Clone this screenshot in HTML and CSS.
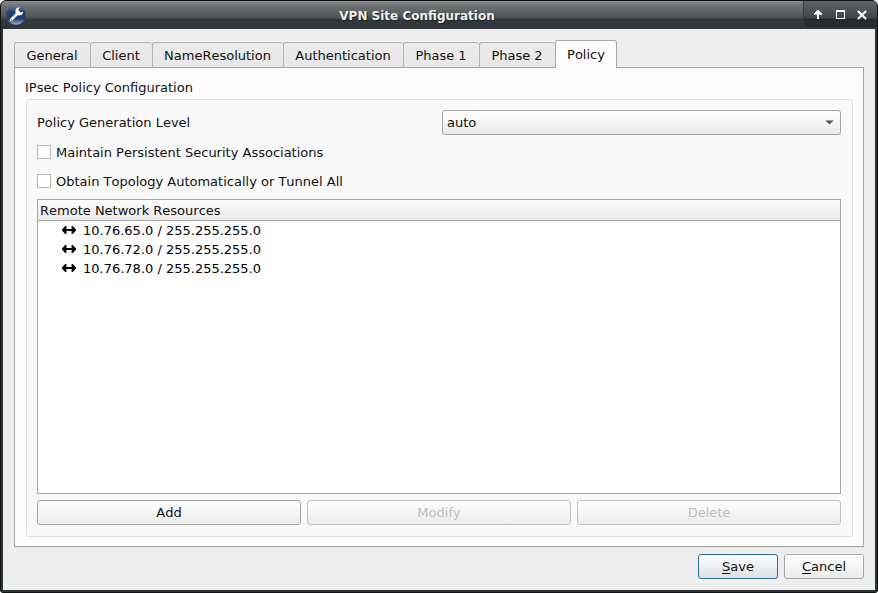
FILE: index.html
```html
<!DOCTYPE html>
<html lang="en">
<head>
<meta charset="utf-8">
<title>VPN Site Configuration</title>
<link rel="stylesheet" href="styles.css">
</head>
<body>
<div class="window">
  <header class="titlebar">
    <svg class="app-icon" width="20" height="20" viewBox="0 0 20 20">
      <defs><linearGradient id="ball" x1="0" y1="0" x2="0" y2="1"><stop offset="0" stop-color="#7484a6"/><stop offset=".35" stop-color="#233c6c"/><stop offset=".7" stop-color="#203e77"/><stop offset="1" stop-color="#a9b7d0"/></linearGradient></defs>
      <circle cx="10" cy="10" r="9.8" fill="url(#ball)"/>
      <path d="M5.2 14.8 L12 8" stroke="#fff" stroke-width="2.7" stroke-linecap="round"/>
      <path d="M13.6 2.6 A3.9 3.9 0 1 0 17.2 6.6 L14.8 7.6 L12.4 5.2 Z" fill="#fff"/>
      <circle cx="5.3" cy="14.7" r=".7" fill="#46608f"/>
    </svg>
    <h1 class="title">VPN Site Configuration</h1>
    <div class="controls">
      <svg width="8" height="9" viewBox="0 0 8 9"><path d="M3 9V5H0V3H1V2H2V1H3V0H5V1H6V2H7V3H8V5H5V9Z" fill="#fff"/><path d="M1 4H3V5H1ZM5 4H7V5H5Z" fill="#aaaeb0"/></svg>
      <svg width="9" height="9" viewBox="0 0 9 9"><path d="M0 0H9V9H0ZM1 2V8H8V2Z" fill="#fff" fill-rule="evenodd"/></svg>
      <svg width="10" height="10" viewBox="0 0 10 10"><path d="M.9 .9L9.1 9.1M9.1 .9L.9 9.1" stroke="#fff" stroke-width="2.1"/></svg>
    </div>
  </header>
  <main class="content">
    <nav class="tabs">
      <span class="tab w76">General</span>
      <span class="tab w62">Client</span>
      <span class="tab w131">NameResolution</span>
      <span class="tab w120">Authentication</span>
      <span class="tab w76">Phase 1</span>
      <span class="tab w76">Phase 2</span>
      <span class="tab active">Policy</span>
    </nav>
    <section class="panel">
      <h2 class="group-title">IPsec Policy Configuration</h2>
      <div class="group">
        <div class="row">
          <span>Policy Generation Level</span>
          <div class="combo"><span>auto</span><svg width="9" height="5" viewBox="0 0 9 5"><path d="M.3 .4H8.7L4.5 4.6Z" fill="#555"/></svg></div>
        </div>
        <label class="check"><i class="box"></i>Maintain Persistent Security Associations</label>
        <label class="check"><i class="box"></i>Obtain Topology Automatically or Tunnel All</label>
        <div class="list">
          <div class="list-head">Remote Network Resources</div>
          <div class="item"><svg class="arrows" width="14" height="9" viewBox="0 0 14 9"><path d="M0 3.5L3.2 0H4.4V3H9.6V0H10.8L14 3.5V4.5L10.8 8H9.6V5H4.4V8H3.2L0 4.5Z"/></svg>10.76.65.0 / 255.255.255.0</div>
          <div class="item"><svg class="arrows" width="14" height="9" viewBox="0 0 14 9"><path d="M0 3.5L3.2 0H4.4V3H9.6V0H10.8L14 3.5V4.5L10.8 8H9.6V5H4.4V8H3.2L0 4.5Z"/></svg>10.76.72.0 / 255.255.255.0</div>
          <div class="item"><svg class="arrows" width="14" height="9" viewBox="0 0 14 9"><path d="M0 3.5L3.2 0H4.4V3H9.6V0H10.8L14 3.5V4.5L10.8 8H9.6V5H4.4V8H3.2L0 4.5Z"/></svg>10.76.78.0 / 255.255.255.0</div>
        </div>
        <div class="actions">
          <button class="btn">Add</button>
          <button class="btn" disabled>Modify</button>
          <button class="btn" disabled>Delete</button>
        </div>
      </div>
    </section>
    <footer class="footer">
      <button class="btn primary"><span><span class="key">S</span>ave</span></button>
      <button class="btn"><span><span class="key">C</span>ancel</span></button>
    </footer>
  </main>
</div>
</body>
</html>
```
FILE: styles.css
```css
* { box-sizing: border-box; }
html, body { margin: 0; background: #fff; }
body { font: 13px/15px "DejaVu Sans", sans-serif; font-kerning: none; color: #111; }
h1, h2 { margin: 0; font: inherit; font-kerning: none; }
svg { display: block; }

.window {
  width: 878px; height: 593px;
  display: flex; flex-direction: column;
  background: #2d3437;
  border: 1px solid #101314;
  border-radius: 6px 6px 3px 3px;
  padding: 0 2px 2px;
  overflow: hidden;
}
.titlebar {
  height: 28px; flex: none;
  margin: 0 -2px;
  padding-left: 5px;
  display: grid; grid-template-columns: 20px 1fr 74px;
  align-items: center;
  background: linear-gradient(#8c8e8f 0, #707475 4px, #4c5153 17px, #33393c 18px, #303639 100%);
}
.title {
  text-align: center; font-weight: bold; font-size: 12px;
  color: #eee; text-shadow: 1px 1px 1px #222;
  padding: 2px 0 0 5px;
}
.controls {
  align-self: start; height: 26px;
  display: flex; align-items: center; gap: 14px;
  padding: 1px 0 0 10px;
  background: linear-gradient(#5f6465 0, #414648 17px, #262b2d 18px, #282d2f 100%);
  border-left: 1px solid #34393b;
  border-bottom-left-radius: 6px;
}
.controls svg:last-child { margin: 1px 0 0 -2px; }

.content {
  flex: 1; background: #eee;
  padding: 11px 11px 11px;
  display: flex; flex-direction: column;
}
.tabs { display: flex; align-items: flex-end; height: 28px; flex: none; position: relative; z-index: 1; }
.tab {
  height: 26px; padding: 5px 1px 0 0; text-align: center;
  border: 1px solid #b4b4b4; border-right: 0; border-bottom-color: #a8a8a8;
  border-radius: 3px 3px 0 0;
  background: linear-gradient(#ebebeb, #e7e7e7);
}
.w62 { width: 62px; }
.w76 { width: 76px; }
.w120 { width: 120px; }
.w131 { width: 131px; }
.tab.active {
  width: 62px; height: 28px; padding: 6px 0 0;
  border: 1px solid #a8a8a8; border-bottom: 0;
  background: linear-gradient(#fff, #fcfcfc);
}
.panel {
  height: 480px; flex: none; margin-top: -1px;
  border: 1px solid #a8a8a8; background: #fcfcfc;
  padding: 12px 10px 9px;
  display: flex; flex-direction: column;
  box-shadow: 0 1px 0 #e4e4e4;
}
.group-title { height: 19px; }
.group {
  flex: 1; margin-left: 1px;
  border: 1px solid #dfdfdf; border-radius: 3px; background: #f9f9f9;
  padding: 10px 11px 11px 10px;
  display: flex; flex-direction: column;
}
.row { display: flex; justify-content: space-between; align-items: center; height: 25px; }
.combo {
  width: 399px; height: 25px; padding: 0 6px 0 4px;
  display: flex; align-items: center; justify-content: space-between;
  border: 1px solid #a6a6a6; border-radius: 3px;
  background: linear-gradient(#fefefe, #ebebeb);
}
.check { height: 14px; margin-top: 10px; display: flex; align-items: center; gap: 5px; }
.check + .check { margin-top: 15px; }
.box { width: 14px; height: 14px; border: 1px solid #b9b9b9; background: #fff; }
.list { flex: 1; margin: 11px 0 6px; border: 1px solid #a8a8a8; background: #fff; }
.list-head {
  height: 21px; padding: 3px 2px 0;
  border-bottom: 1px solid #a8a8a8;
  background: linear-gradient(#fcfcfc, #e9e9e9);
}
.item { height: 19px; padding-left: 24px; display: flex; align-items: center; gap: 7px; color: #000; }
.actions { display: grid; grid-template-columns: repeat(3, 264px); gap: 6px; }
.btn {
  height: 25px; padding: 0; margin: 0;
  font: inherit; font-kerning: none; color: #111;
  border: 1px solid #a6a6a6; border-radius: 3px;
  background: linear-gradient(#fefefe, #ebebeb);
}
.btn:disabled { color: #bebebe; border-color: #c0c0c0; }
.footer { display: flex; justify-content: flex-end; gap: 6px; margin-top: 7px; }
.footer .btn { width: 80px; }
.btn.primary { border-color: #2b70a0; background: linear-gradient(#fdfefe, #dbe0e5); }
.key { text-decoration: underline; text-underline-offset: 2px; text-decoration-thickness: 1px; }
```
